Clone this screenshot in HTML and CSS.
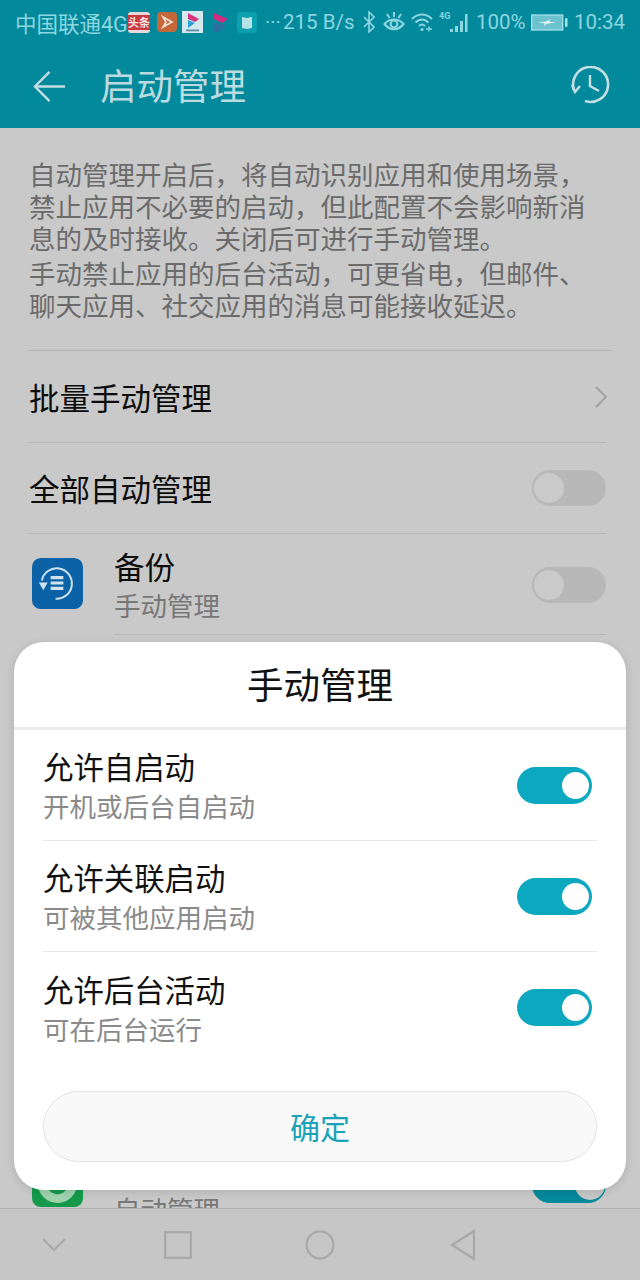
FILE: index.html
```html
<!DOCTYPE html>
<html lang="zh-CN">
<head>
<meta charset="utf-8">
<title>启动管理</title>
<link rel="stylesheet" href="styles.css">
</head>
<body>
<div class="screen">
  <header class="appbar">
    <div class="status">
      <span class="carrier">中国联通4G</span>
      <span class="noti noti-news">头条</span>
      <svg class="noti noti-play" viewBox="0 0 20 20"><rect width="20" height="20" rx="4" fill="#c4683a"/><path d="M6 5l9 5-9 5 3-5z" fill="none" stroke="#f4e3d8" stroke-width="1.600"/></svg>
      <svg class="noti noti-youku" viewBox="0 0 21 22"><rect width="21" height="22" fill="#d4e8ee"/><path d="M6 2l11 6-4 3-7-3z" fill="#d3357f"/><path d="M6 9l7 3-7 5z" fill="#2f9fd8"/><rect x="4" y="18.500" width="13" height="1.800" fill="#5a8aa8"/></svg>
      <svg class="noti noti-pink" viewBox="0 0 18 21"><path d="M2 1l14 6-6 4-8-4z" fill="#d32c7c"/><path d="M2 11l8 1 4 2-8 6H2z" fill="#2a6f9e"/></svg>
      <svg class="noti noti-book" viewBox="0 0 20 21"><rect width="20" height="21" rx="4" fill="#0aa0ae"/><path d="M5 5l5 1 5-1v11l-5 1-5-1z" fill="#b4e2e8"/></svg>
      <span class="dots">···</span>
      <span class="speed">215 B/s</span>
      <svg class="sicon sicon-bt" viewBox="0 0 12 22"><path d="M1 6l10 10-5 5V1l5 5L1 16" fill="none" stroke="#8ed6e0" stroke-width="1.600"/></svg>
      <svg class="sicon sicon-eye" viewBox="0 0 22 22"><path d="M1.500 13c5-6 14-6 19 0-5 7-14 7-19 0z" fill="none" stroke="#8ed6e0" stroke-width="2.200"/><circle cx="11" cy="13" r="3.400" fill="none" stroke="#8ed6e0" stroke-width="2"/><path d="M4 3l2.500 4M11 1v5M18 3l-2.500 4" stroke="#8ed6e0" stroke-width="2"/></svg>
      <svg class="sicon sicon-wifi" viewBox="0 0 22 20"><path d="M1 7c6-6 14-6 20 0M4.500 10.500c4-4 9-4 13 0M8 14c2-2 4-2 6 0" fill="none" stroke="#8ed6e0" stroke-width="2"/><circle cx="11" cy="17.500" r="1.600" fill="#8ed6e0"/><path d="M15 17h6M18 14.500v5" stroke="#8ed6e0" stroke-width="1.300"/></svg>
      <svg class="sicon sicon-signal" viewBox="0 0 31 22"><text x="0" y="8" class="mini">4G</text><path d="M11 18h3v3h-3zM16 15h3v6h-3zM21 10h3v11h-3zM26 3h2.500v18H26z" fill="#8ed6e0"/></svg>
      <span class="pct">100%</span>
      <svg class="sicon sicon-batt" viewBox="0 0 37 17"><rect x=".7" y="1" width="31" height="15" fill="#6cc3cf" stroke="#a6e0e8" stroke-width="1.300"/><path d="M7 8.500l9-1L19 5l-1 2.800 7 .7-9 1L13 12l1-2.800z" fill="#f0fbfc"/><rect x="34" y="4" width="2.500" height="9" rx="1" fill="#a6e0e8"/></svg>
      <span class="clock">10:34</span>
    </div>
    <div class="toolbar">
      <svg class="back" viewBox="0 0 34 34"><path d="M17 2L2 17l15 15M2 17h31" fill="none" stroke="#c4dfe3" stroke-width="2.400"/></svg>
      <h1 class="title">启动管理</h1>
      <svg class="history" viewBox="0 0 40 40"><path d="M4 24A17.500 17.500 0 1 1 15 35" fill="none" stroke="#c4dfe3" stroke-width="2.600"/><path d="M2 19l3 7 5-6" fill="none" stroke="#c4dfe3" stroke-width="2.400"/><path d="M20 9v11l9 5" fill="none" stroke="#c4dfe3" stroke-width="2.400"/></svg>
    </div>
  </header>

  <main class="content">
    <section class="intro">
      <p>自动管理开启后，将自动识别应用和使用场景，禁止应用不必要的启动，但此配置不会影响新消息的及时接收。关闭后可进行手动管理。</p>
      <p>手动禁止应用的后台活动，可更省电，但邮件、聊天应用、社交应用的消息可能接收延迟。</p>
    </section>
    <div class="row row-batch">
      <span class="row-label">批量手动管理</span>
      <svg class="chevron" viewBox="0 0 14 24"><path d="M2 2l10 10L2 22" fill="none" stroke="#a3a3a3" stroke-width="2"/></svg>
    </div>
    <div class="row row-all">
      <span class="row-label">全部自动管理</span>
      <span class="toggle"></span>
    </div>
    <div class="app">
      <svg class="app-icon" viewBox="0 0 52 52"><rect width="52" height="52" rx="9" fill="#0b62a6"/><path d="M10 23A15.500 15.500 0 1 1 24 41.500" fill="none" stroke="#cfe2f0" stroke-width="2"/><path d="M7 25h9l-4.500 8z" fill="#cfe2f0"/><path d="M19 20h13M19 25.500h13M19 31h13" stroke="#cfe2f0" stroke-width="3.200"/></svg>
      <div class="app-main">
        <div class="app-name">备份</div>
        <div class="app-sub">手动管理</div>
      </div>
      <span class="toggle"></span>
    </div>
    <div class="app app-last">
      <svg class="app-icon" viewBox="0 0 52 52"><rect width="52" height="52" rx="9" fill="#159a4c"/><circle cx="26" cy="28" r="20" fill="#9fd3ae"/><circle cx="26" cy="28" r="11" fill="#159a4c"/></svg>
      <div class="app-main">
        <div class="app-name">&nbsp;</div>
        <div class="app-sub">自动管理</div>
      </div>
      <span class="toggle toggle-dim-on"></span>
    </div>
  </main>

  <nav class="navbar">
    <svg class="nav-hide" viewBox="0 0 26 16"><path d="M2 2l11 11L24 2" fill="none" stroke="#a8a8a8" stroke-width="2"/></svg>
    <svg class="nav-square" viewBox="0 0 28 28"><rect x="1.200" y="1.200" width="25.600" height="25.600" fill="none" stroke="#a8a8a8" stroke-width="2.200"/></svg>
    <svg class="nav-circle" viewBox="0 0 30 30"><circle cx="15" cy="15" r="13.500" fill="none" stroke="#a8a8a8" stroke-width="2.200"/></svg>
    <svg class="nav-tri" viewBox="0 0 26 32"><path d="M24 2v28L2 16z" fill="none" stroke="#a8a8a8" stroke-width="2.200"/></svg>
  </nav>

  <div class="dialog">
    <h2 class="dialog-title">手动管理</h2>
    <div class="opts">
      <div class="opt">
        <div class="opt-main"><div class="opt-name">允许自启动</div><div class="opt-sub">开机或后台自启动</div></div>
        <span class="switch"></span>
      </div>
      <div class="opt">
        <div class="opt-main"><div class="opt-name">允许关联启动</div><div class="opt-sub">可被其他应用启动</div></div>
        <span class="switch"></span>
      </div>
      <div class="opt">
        <div class="opt-main"><div class="opt-name">允许后台活动</div><div class="opt-sub">可在后台运行</div></div>
        <span class="switch"></span>
      </div>
    </div>
    <div class="confirm">确定</div>
  </div>
</div>
</body>
</html>
```

FILE: styles.css
```css
* { box-sizing: border-box; }
html, body { margin: 0; padding: 0; }
body { font-family: "Noto Sans CJK SC", "Noto Sans", sans-serif; }
h1, h2, p { margin: 0; font-weight: 400; }

.screen {
  position: relative;
  width: 640px;
  height: 1280px;
  display: flex;
  flex-direction: column;
  overflow: hidden;
  background: #c9c9c9;
}

/* App bar */
.appbar { height: 128px; flex: none; background: #028a9c; }
.status {
  height: 44px;
  display: flex;
  align-items: center;
  padding-left: 15px;
  color: #8ed6e0;
  font-family: "Roboto", "Noto Sans CJK SC", sans-serif;
  font-size: 20.500px;
  white-space: nowrap;
}
.carrier { width: 113px; font-size: 21.500px; }
.noti, .sicon { flex: none; display: block; }
.noti-news {
  width: 22px; height: 21px; border-radius: 3px;
  background: linear-gradient(#e8d8d8 0 15%, #c8383f 15% 85%, #e8d8d8 85%);
  color: #f6e6e6; font-size: 11px; line-height: 21px; text-align: center;
  font-family: "Noto Sans CJK SC", sans-serif; font-weight: 700; overflow: hidden;
}
.noti-play { width: 20px; height: 20px; margin-left: 7px; }
.noti-youku { width: 21px; height: 22px; margin-left: 5px; }
.noti-pink { width: 18px; height: 21px; margin-left: 9px; }
.noti-book { width: 20px; height: 21px; margin-left: 7px; }
.dots { width: 18px; margin-left: 8px; font-size: 20px; }
.speed { width: 73px; margin-left: 0; }
.sicon-bt { width: 12px; height: 22px; margin-left: 7px; }
.sicon-eye { width: 22px; height: 22px; margin-left: 8px; }
.sicon-wifi { width: 22px; height: 20px; margin-left: 6px; }
.sicon-signal { width: 31px; height: 22px; margin-left: 6px; }
.mini { font-size: 9px; font-weight: 700; fill: #8ed6e0; font-family: "Roboto", sans-serif; }
.pct { width: 49px; margin-left: 6px; }
.sicon-batt { width: 37px; height: 17px; margin-left: 6px; }
.clock { margin-left: 6px; }

.toolbar {
  height: 84px;
  display: flex;
  align-items: center;
  padding: 0 30px 0 33px;
}
.back { width: 33px; height: 33px; flex: none; }
.title { flex: 1; margin-left: 34px; padding-bottom: 2px; font-size: 36.500px; color: #bcdbe0; line-height: 1; }
.history { width: 40px; height: 40px; flex: none; }

/* Dimmed content */
.content { flex: 1; min-height: 0; overflow: hidden; padding-top: 30px; }
.intro {
  margin: 0 28px;
  padding: 0 20px 0 1px;
  font-size: 26.500px;
  line-height: 32px;
  color: #6b6b6b;
  border-bottom: 1px solid #b4b4b4;
  height: 193px;
}
.intro p + p { margin-top: 3px; }
.row {
  display: flex;
  align-items: center;
  justify-content: space-between;
  margin: 0 34px 0 28px;
  padding-left: 1px;
  height: 91px;
  border-bottom: 1px solid #b8b8b8;
}
.row-batch { height: 92px; }
.row-label { font-size: 30.500px; color: #0c0c0c; }
.chevron { width: 14px; height: 24px; margin-right: -2px; }
.toggle {
  position: relative;
  flex: none;
  width: 74px;
  height: 36px;
  border-radius: 18px;
  background: #b8b8b8;
}
.toggle::before {
  content: "";
  position: absolute;
  left: 2px; top: 3px;
  width: 30px; height: 30px;
  border-radius: 50%;
  background: #cacaca;
}
.toggle-dim-on { background: #058a9c; }
.toggle-dim-on::before { left: 43px; background: #c8c8c8; }

.app {
  display: flex;
  align-items: center;
  height: 101px;
  margin: 0 34px 0 32px;
  position: relative;
}
.app-icon { width: 51px; height: 51px; flex: none; align-self: flex-start; margin-top: 24px; }
.app-main {
  flex: 1;
  align-self: stretch;
  margin-left: 31px;
  padding-top: 12px;
  border-bottom: 1px solid #b8b8b8;
}
.app-name { font-size: 30.500px; line-height: 40px; color: #0c0c0c; }
.app-sub { font-size: 26.500px; line-height: 38px; color: #777; }
.app .toggle { position: absolute; right: 0; top: 33px; }
.app-last { margin-top: 501px; }
.app-last .app-icon { margin-top: 20px; }
.app-last .app-main { border-bottom: 0; padding-top: 14px; }
.app-last .toggle { top: 31px; }

/* Nav */
.navbar {
  position: relative;
  height: 72px;
  flex: none;
  display: flex;
  align-items: center;
  padding: 0 0 0 41px;
  background: #c6c6c6;
  border-top: 1px solid #b2b2b2;
}
.nav-hide { width: 26px; height: 16px; }
.nav-square { width: 28px; height: 28px; margin-left: 97px; }
.nav-circle { width: 30px; height: 30px; margin-left: 113px; }
.nav-tri { width: 26px; height: 32px; margin-left: 115px; }

/* Dialog */
.dialog {
  position: absolute;
  left: 14px;
  top: 642px;
  width: 612px;
  height: 548px;
  border-radius: 30px;
  background: #fff;
  box-shadow: 0 2px 10px rgba(0, 0, 0, 0.12);
  padding: 0 29px;
}
.dialog-title {
  margin: 0 -29px;
  height: 88px;
  border-bottom: 3px solid #ececec;
  font-size: 36.500px;
  line-height: 83px;
  text-align: center;
  color: #111;
}
.opt {
  display: flex;
  align-items: center;
  justify-content: space-between;
  height: 111px;
  border-bottom: 1px solid #e6e6e6;
}
.opt:last-child { border-bottom: 0; }
.opt-name { font-size: 30.400px; line-height: 40px; color: #111; }
.opt-sub { margin-top: 2px; font-size: 26.500px; line-height: 36px; color: #8a8a8a; }
.switch {
  position: relative;
  flex: none;
  width: 75px;
  height: 37px;
  margin-right: 5px;
  border-radius: 19px;
  background: #0ba8bf;
}
.switch::before {
  content: "";
  position: absolute;
  right: 3px; top: 5px;
  width: 27px; height: 27px;
  border-radius: 50%;
  background: #fff;
}
.confirm {
  margin-top: 28px;
  height: 71px;
  border: 1px solid #e2e2e2;
  border-radius: 36px;
  background: #f9f9fa;
  color: #1aa3b8;
  font-size: 30px;
  line-height: 69px;
  text-align: center;
}
```
